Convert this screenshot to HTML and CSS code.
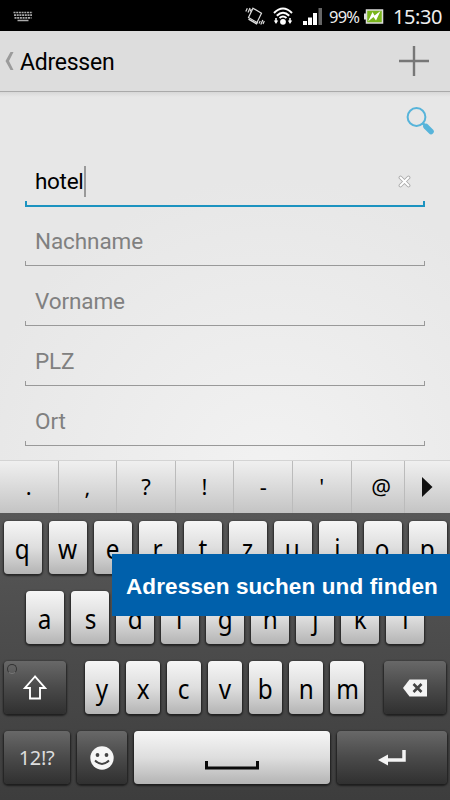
FILE: index.html
```html
<!DOCTYPE html>
<html lang="de">
<head>
  <meta charset="UTF-8">
  <meta name="viewport" content="width=device-width, initial-scale=1.0">
  <title>Adressen</title>
  <link rel="stylesheet" href="styles.css">
</head>
<body>
  <div class="phone">
    <header class="status-bar">
      <svg class="status-keyboard" width="20" height="11" viewBox="0 0 20 11">
        <path d="M.5 1.500h19M1 4.200h18M1.500 6.800h17" stroke="#aaa" stroke-width="1.700" stroke-dasharray="2 .7"/>
        <path d="M4.500 9.500h11" stroke="#aaa" stroke-width="1.500"/>
      </svg>
      <svg class="status-vibrate" width="20" height="20" viewBox="0 0 20 20" fill="none" stroke="#ddd" stroke-width="1.200">
        <path d="M8 2.200l8.500 5-4.500 9.300-8.500-5z"/>
        <path d="M3.500 13.200l8 4.500 1-1.500" stroke-width="1.500"/>
        <path d="M.8 5.500l1.500-3.200M3 6.500l2-4.500M5.200 5.500l1-2.500M14 17.500l1.200-2.500M15.800 18.500l2-4.500M18 18l1.300-3"/>
      </svg>
      <svg class="status-wifi" width="20" height="20" viewBox="0 0 20 20" fill="none" stroke="#fff" stroke-width="2">
        <path d="M1 7Q10-2 19 7M3.800 9.800Q10 3.500 16.200 9.800M6.500 12Q10 9 13.500 12"/>
        <circle cx="10" cy="15.800" r="2.900" fill="#fff" stroke="none"/>
        <path d="M3 12v4M17 12v4" stroke-width="1.500"/>
        <path d="M.8 14.500h4.400L3 18zM14.800 14.500h4.400L17 18z" fill="#fff" stroke="none"/>
      </svg>
      <svg class="status-signal" width="20" height="18" viewBox="0 0 20 18" fill="#fff">
        <path d="M0 14h4v4H0zM5 10.500h4V18H5zM10 6h4v12h-4z"/>
        <path d="M15.500 1H19v17h-3.500z" fill="#666"/>
      </svg>
      <span class="status-percent">99%</span>
      <svg class="status-battery" width="20" height="15" viewBox="0 0 20 15">
        <path d="M0 4.500h3v6H0z" fill="#ddd"/>
        <rect x="2.500" y="1" width="16" height="13" fill="#79b51c" stroke="#ddd" stroke-width="1.500"/>
        <path d="M4 12.500L8.500 3l2 3.500L16.500 2 12 11.500 9.500 8z" fill="#fff"/>
      </svg>
      <span class="status-time">15:30</span>
    </header>

    <nav class="action-bar">
      <svg class="back" width="9" height="18" viewBox="0 0 9 18">
        <path d="M8.500 0H5.500L.5 9l5 9h3L4 9z" fill="#9b9b9b"/>
      </svg>
      <h1 class="title">Adressen</h1>
      <svg class="add" width="30" height="30" viewBox="0 0 30 30">
        <path d="M15 0v30M0 15h30" stroke="#777" stroke-width="2.400"/>
      </svg>
    </nav>

    <main class="form">
      <div class="search-row">
        <svg width="28" height="28" viewBox="0 0 28 28">
          <circle cx="10.500" cy="10" r="8.900" fill="none" stroke="#57b4da" stroke-width="2"/>
          <path d="M16.500 16l3 3" stroke="#57b4da" stroke-width="2.500"/>
          <path d="M20 19.500l5 5" stroke="#57b4da" stroke-width="5.500" stroke-linecap="round"/>
        </svg>
      </div>
      <div class="field focused">
        <span>hotel</span><i class="caret"></i>
        <svg class="clear" width="13" height="13" viewBox="0 0 13 13" stroke-linecap="round">
          <path d="M2.500 2.500l8 8M10.500 2.500l-8 8" stroke="#aaa" stroke-width="3.800"/>
          <path d="M2.500 2.500l8 8M10.500 2.500l-8 8" stroke="#fff" stroke-width="2"/>
        </svg>
      </div>
      <div class="field">Nachname</div>
      <div class="field">Vorname</div>
      <div class="field">PLZ</div>
      <div class="field">Ort</div>
    </main>

    <section class="suggestions">
      <span>.</span>
      <span>,</span>
      <span>?</span>
      <span>!</span>
      <span>-</span>
      <span>'</span>
      <span class="at">@</span>
      <span class="more">
        <svg width="11" height="20" viewBox="0 0 11 20"><path d="M0 0l10.500 10L0 20z" fill="#111"/></svg>
      </span>
    </section>

    <section class="keyboard">
      <div class="row">
        <span class="key"><b>q</b></span>
        <span class="key"><b>w</b></span>
        <span class="key"><b>e</b></span>
        <span class="key"><b>r</b></span>
        <span class="key"><b>t</b></span>
        <span class="key"><b>z</b></span>
        <span class="key"><b>u</b></span>
        <span class="key"><b>i</b></span>
        <span class="key"><b>o</b></span>
        <span class="key"><b>p</b></span>
      </div>
      <div class="row middle">
        <span class="key"><b>a</b></span>
        <span class="key"><b>s</b></span>
        <span class="key"><b>d</b></span>
        <span class="key"><b>f</b></span>
        <span class="key"><b>g</b></span>
        <span class="key"><b>h</b></span>
        <span class="key"><b>j</b></span>
        <span class="key"><b>k</b></span>
        <span class="key"><b>l</b></span>
      </div>
      <div class="row split">
        <span class="key dark shift">
          <i class="led"></i>
          <svg width="24" height="25" viewBox="0 0 24 25">
            <path d="M12 1.500L2 13h5v10.500h10V13h5z" fill="none" stroke="#fff" stroke-width="1.900"/>
          </svg>
        </span>
        <div class="letters">
          <span class="key"><b>y</b></span>
          <span class="key"><b>x</b></span>
          <span class="key"><b>c</b></span>
          <span class="key"><b>v</b></span>
          <span class="key"><b>b</b></span>
          <span class="key"><b>n</b></span>
          <span class="key"><b>m</b></span>
        </div>
        <span class="key dark delete">
          <svg width="26" height="18" viewBox="0 0 26 18">
            <path d="M7.500.5H25v17H7.500L1 9z" fill="#f4f4f4"/>
            <path d="M11.500 5l8 8M19.500 5l-8 8" stroke="#444" stroke-width="2.600"/>
          </svg>
        </span>
      </div>
      <div class="row bottom">
        <span class="key dark symbols">12!?</span>
        <span class="key dark smiley">
          <svg width="24" height="24" viewBox="0 0 24 24">
            <circle cx="12" cy="12" r="11.700" fill="#f6f6f6"/>
            <circle cx="7.500" cy="9" r="1.900" fill="#444"/>
            <circle cx="16.500" cy="9" r="1.900" fill="#444"/>
            <path d="M5 14.500q7 7 14 0" fill="none" stroke="#444" stroke-width="1.800"/>
          </svg>
        </span>
        <span class="key space">
          <svg width="54" height="9" viewBox="0 0 54 9">
            <path d="M1.500 0v7h51V0" fill="none" stroke="#0a0a0a" stroke-width="3"/>
          </svg>
        </span>
        <span class="key dark enter">
          <svg width="28" height="16" viewBox="0 0 28 16">
            <path d="M26 0v10H8" fill="none" stroke="#f4f4f4" stroke-width="3.500"/>
            <path d="M0 10l10-5.500v11z" fill="#f4f4f4"/>
          </svg>
        </span>
      </div>
    </section>

    <div class="banner">Adressen suchen und finden</div>
  </div>
</body>
</html>
```
FILE: styles.css
```css
* {
  box-sizing: border-box;
}

body {
  margin: 0;
  background: #000;
}

.phone {
  position: relative;
  width: 450px;
  height: 800px;
  overflow: hidden;
  display: flex;
  flex-direction: column;
  font-family: Roboto, sans-serif;
}

.phone svg {
  display: block;
  flex: none;
}

/* Status bar */
.status-bar {
  height: 31px;
  display: flex;
  align-items: center;
  padding: 1px 8px 0 13px;
  background: #000;
  color: #eee;
  font-family: "Noto Sans", sans-serif;
}

.status-vibrate {
  margin-left: auto;
}

.status-wifi {
  margin-left: 8px;
}

.status-signal {
  margin-left: 10px;
}

.status-percent {
  width: 31px;
  margin-left: 6px;
  font-size: 16.5px;
  letter-spacing: -0.8px;
}

.status-battery {
  margin-left: 4px;
}

.status-time {
  width: 49px;
  margin-left: 9px;
  font-size: 20px;
  letter-spacing: -0.4px;
}

/* Action bar */
.action-bar {
  height: 61px;
  display: flex;
  align-items: center;
  padding: 0 21px 0 5px;
  background: #ddd;
  border-bottom: 1px solid #aaa;
}

.title {
  margin: 2px 0 0 6px;
  font-size: 23px;
  font-weight: 400;
  letter-spacing: -0.25px;
  color: #000;
}

.add {
  margin-left: auto;
}

/* Form */
.form {
  height: 368px;
  padding: 0 25px;
  background: linear-gradient(#d8d8d8, rgba(230, 230, 230, 0) 5px),
    radial-gradient(circle at 60% 105%, #f2f2f2, #e7e7e7 300px);
}

.search-row {
  height: 67px;
  display: flex;
  justify-content: flex-end;
  padding: 15px 0 0;
  margin-right: -9px;
}

.field {
  position: relative;
  height: 47px;
  margin-bottom: 13px;
  padding: 0 10px 2px;
  display: flex;
  align-items: center;
  font-size: 22.5px;
  letter-spacing: -0.1px;
  color: #808080;
  border-bottom: 1px solid #999;
}

/* Little upturned ends of the underline */
.field::before,
.field::after {
  content: "";
  position: absolute;
  bottom: 0;
  width: 1px;
  height: 4px;
  background: #999;
}

.field::before {
  left: 0;
}

.field::after {
  right: 0;
}

.focused {
  height: 48px;
  margin-bottom: 12px;
  color: #000;
  letter-spacing: -0.3px;
  border-bottom: 2px solid #1c93c0;
}

.focused::before,
.focused::after {
  width: 2px;
  background: #1c93c0;
}

.caret {
  width: 2px;
  height: 31px;
  background: #999;
}

.clear {
  margin-left: auto;
  margin-right: 4px;
}

/* Suggestion strip */
.suggestions {
  height: 53px;
  display: grid;
  grid-template-columns: repeat(6, 58.6px) 53px 1fr;
  border-top: 1px solid #d4d4d4;
  background: linear-gradient(#f0f0f0, #c4c4c4);
  font-family: "Noto Sans", sans-serif;
  font-size: 22px;
  color: #000;
}

.suggestions span {
  display: flex;
  align-items: center;
  justify-content: center;
  padding-bottom: 2px;
  border-right: 1px solid #bbb;
}

.suggestions .at {
  padding-left: 7px;
}

.suggestions .more {
  padding-bottom: 0;
  border-right: 0;
}

/* Keyboard */
.keyboard {
  flex: 1;
  display: flex;
  flex-direction: column;
  gap: 17px;
  padding: 8px 3.5px 0;
  background: linear-gradient(#585858, #3d3d3d);
  font-family: "Noto Sans", sans-serif;
}

.row {
  height: 53px;
  display: flex;
  gap: 7px;
}

.middle {
  padding-left: 22.5px;
}

.key {
  width: 38px;
  height: 53px;
  flex: none;
  display: flex;
  align-items: center;
  justify-content: center;
  border-radius: 4px;
  background: linear-gradient(#f6f6f6, #dedede 50%, #b4b4b4);
  box-shadow: 0 1px 2px 1px rgba(0, 0, 0, 0.55);
  font-size: 27px;
  color: #000;
}

/* Key letters are a bit narrow */
.key b {
  padding-top: 2px;
  font-weight: 400;
  transform: scaleX(0.9);
}

.split {
  justify-content: space-between;
}

.letters {
  display: flex;
  gap: 7px;
}

.letters .key {
  width: 33.8px;
}

.key.dark {
  background: linear-gradient(#686868, #4a4a4a 50%, #303030);
  color: #ddd;
}

.key.shift {
  position: relative;
  width: 62px;
}

.led {
  position: absolute;
  left: 3px;
  top: 3px;
  width: 10px;
  height: 10px;
  border: 1px solid #333;
  border-bottom-color: #777;
  border-radius: 50%;
}

.key.delete {
  width: 62.5px;
}

.key.symbols {
  width: 66px;
  font-size: 20px;
  letter-spacing: -0.4px;
}

.key.smiley {
  width: 50.5px;
}

.key.space {
  width: 195.5px;
  padding-top: 16px;
}

.key.enter {
  flex: 1;
}

/* Caption over the keyboard */
.banner {
  position: absolute;
  left: 112px;
  top: 554px;
  right: 0;
  height: 62px;
  padding-left: 14px;
  background: #0060ab;
  color: #fff;
  font: bold 22.5px/65px "Liberation Sans", Arial, sans-serif;
  letter-spacing: 0.12px;
  white-space: nowrap;
}
```
